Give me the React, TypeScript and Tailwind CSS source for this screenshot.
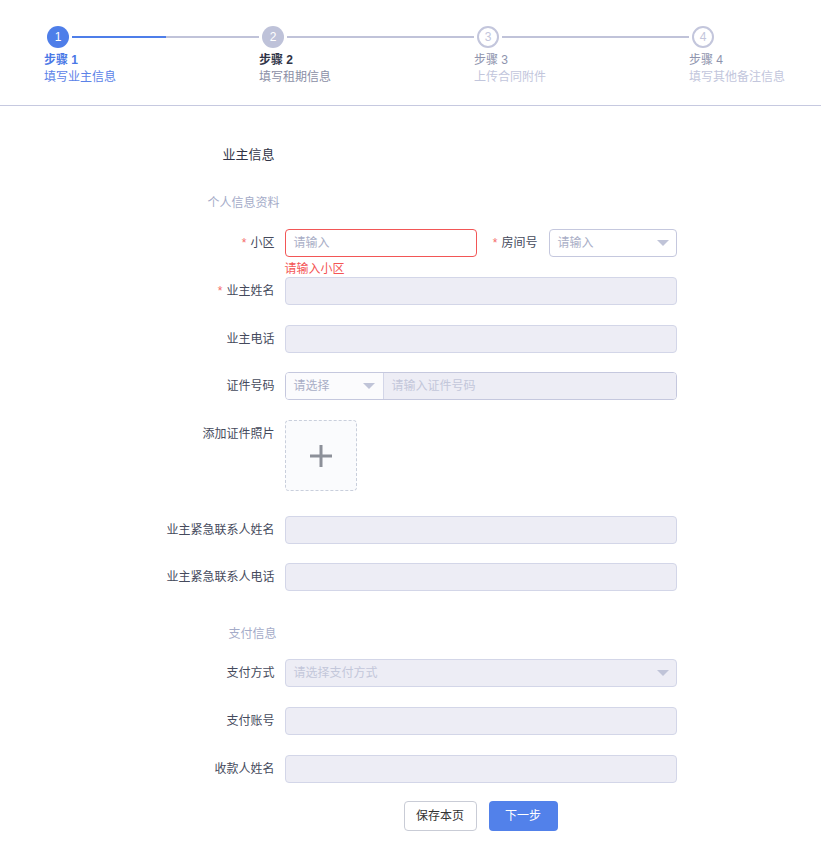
import type { ReactNode } from 'react';

const steps = [
    { no: 1, title: '步骤 1', desc: '填写业主信息', state: 'active' },
    { no: 2, title: '步骤 2', desc: '填写租期信息', state: 'current' },
    { no: 3, title: '步骤 3', desc: '上传合同附件', state: 'wait' },
    { no: 4, title: '步骤 4', desc: '填写其他备注信息', state: 'wait' },
];

function Arrow({ color = '#c0c4d8' }: { color?: string }) {
    return (
        <svg width="12" height="6" viewBox="0 0 12 6" className="shrink-0">
            <path d="M0 0h12L6 6z" fill={color} />
        </svg>
    );
}

function Row({ label, required, children, className = '' }: { label: string; required?: boolean; children: ReactNode; className?: string }) {
    return (
        <div className={`flex items-start ${className}`}>
            <label className="w-[140px] shrink-0 pr-[10px] text-right text-[12px] leading-[28px] text-[#454a5c]">
                {required && <span className="mr-[4px] text-[#f56c6c]">*</span>}
                {label}
            </label>
            <div className="min-w-0 flex-1">{children}</div>
        </div>
    );
}

function GrayInput() {
    return <div className="h-[28px] rounded-[4px] border border-[#d3d6e8] bg-[#ededf5]" />;
}

export default function App() {
    return (
        <main className="min-h-screen w-full bg-white font-['Liberation_Sans','Noto_Sans_CJK_SC',sans-serif]">
            {/* Steps */}
            <div className="flex border-b border-[#c6c9e0] px-[44px] pt-[26px] pb-[19px]">
                {steps.map((s, i) => (
                    <div key={s.no} className={i < 3 ? 'w-[215px] shrink-0' : 'flex-1 whitespace-nowrap'}>
                        <div className="flex items-center">
                            <div
                                className={
                                    s.state === 'active'
                                        ? 'ml-[3px] flex h-[22px] w-[22px] shrink-0 items-center justify-center rounded-full bg-[#4e7ee9] text-[12px] text-white'
                                        : s.state === 'current'
                                          ? 'ml-[3px] flex h-[22px] w-[22px] shrink-0 items-center justify-center rounded-full bg-[#bec2d9] text-[12px] text-white'
                                          : 'ml-[3px] flex h-[22px] w-[22px] shrink-0 items-center justify-center rounded-full border-2 border-[#c3c6dc] bg-white text-[12px] text-[#c3c6dc]'
                                }
                            >
                                {s.no}
                            </div>
                            {i < 3 && (
                                <div className="ml-[3px] flex h-[2px] flex-1">
                                    <div className={i === 0 ? 'flex-1 bg-[#4e7ee9]' : 'flex-1 bg-[#c0c3d9]'} />
                                    <div className="flex-1 bg-[#c0c3d9]" />
                                </div>
                            )}
                        </div>
                        <div
                            className={
                                s.state === 'active'
                                    ? 'mt-[4px] text-[12px] leading-[16px] font-bold text-[#4a78e6]'
                                    : s.state === 'current'
                                      ? 'mt-[4px] text-[12px] leading-[16px] font-bold text-[#303447]'
                                      : 'mt-[4px] text-[12px] leading-[16px] text-[#8e93ad]'
                            }
                        >
                            {s.title}
                        </div>
                        <div
                            className={
                                s.state === 'active'
                                    ? 'text-[12px] leading-[18px] text-[#5b82e8]'
                                    : s.state === 'current'
                                      ? 'text-[12px] leading-[18px] text-[#8b8fa6]'
                                      : 'text-[12px] leading-[18px] text-[#c2c6dc]'
                            }
                        >
                            {s.desc}
                        </div>
                    </div>
                ))}
            </div>

            {/* Form */}
            <div className="mx-auto w-[532px] pt-[39px] pb-[20px]">
                <div className="w-[140px] pr-[10px] text-right text-[13px] leading-[20px] text-[#303447]">业主信息</div>
                <div className="mt-[28px] w-[140px] pr-[5px] text-right text-[12px] leading-[20px] text-[#a4abc8]">个人信息资料</div>

                <div className="mt-[16px] flex items-start">
                    <label className="w-[140px] shrink-0 pr-[10px] text-right text-[12px] leading-[28px] text-[#454a5c]">
                        <span className="mr-[4px] text-[#f56c6c]">*</span>小区
                    </label>
                    <div className="w-[192px] shrink-0">
                        <div className="flex h-[28px] items-center rounded-[4px] border border-[#f25656] bg-white px-[8px] text-[12px] text-[#a9aec6]">
                            请输入
                        </div>
                        <div className="pt-[4px] text-[12px] leading-[16px] text-[#f45454]">请输入小区</div>
                    </div>
                    <label className="w-[72px] shrink-0 pr-[11px] text-right text-[12px] leading-[28px] text-[#454a5c]">
                        <span className="mr-[4px] text-[#f56c6c]">*</span>房间号
                    </label>
                    <div className="flex h-[28px] flex-1 items-center justify-between rounded-[4px] border border-[#c5c8de] bg-white pr-[7px] pl-[8px] text-[12px] text-[#a9aec6]">
                        请输入
                        <Arrow />
                    </div>
                </div>

                <Row label="业主姓名" required>
                    <GrayInput />
                </Row>
                <Row label="业主电话" className="mt-[20px]">
                    <GrayInput />
                </Row>
                <Row label="证件号码" className="mt-[19px]">
                    <div className="flex h-[28px] overflow-hidden rounded-[4px] border border-[#c5c8de]">
                        <div className="flex w-[98px] shrink-0 items-center justify-between border-r border-[#d3d6e8] bg-[#fbfbfd] pr-[8px] pl-[8px] text-[12px] text-[#a9aec6]">
                            请选择
                            <Arrow />
                        </div>
                        <div className="flex flex-1 items-center bg-[#ededf5] px-[8px] text-[12px] text-[#c3c7da]">请输入证件号码</div>
                    </div>
                </Row>
                <Row label="添加证件照片" className="mt-[20px]">
                    <div className="flex h-[71px] w-[72px] items-center justify-center rounded-[4px] border border-dashed border-[#c9cfdc] bg-[#fafbfd]">
                        <svg width="24" height="24" viewBox="0 0 24 24">
                            <path d="M12 1v22M1 12h22" stroke="#8c9099" strokeWidth="3" />
                        </svg>
                    </div>
                </Row>
                <Row label="业主紧急联系人姓名" className="mt-[25px]">
                    <GrayInput />
                </Row>
                <Row label="业主紧急联系人电话" className="mt-[19px]">
                    <GrayInput />
                </Row>

                <div className="mt-[33px] w-[140px] pr-[8px] text-right text-[12px] leading-[20px] text-[#a4abc8]">支付信息</div>

                <Row label="支付方式" className="mt-[15px]">
                    <div className="flex h-[28px] items-center justify-between rounded-[4px] border border-[#d3d6e8] bg-[#ededf5] pr-[7px] pl-[8px] text-[12px] text-[#c3c7da]">
                        请选择支付方式
                        <Arrow />
                    </div>
                </Row>
                <Row label="支付账号" className="mt-[20px]">
                    <GrayInput />
                </Row>
                <Row label="收款人姓名" className="mt-[20px]">
                    <GrayInput />
                </Row>

                <div className="mt-[18px] flex">
                    <div className="w-[140px] shrink-0" />
                    <div className="flex flex-1 justify-center gap-[12px]">
                        <button className="h-[30px] w-[73px] rounded-[4px] border border-[#c9ccd6] bg-white text-[12px] text-[#333]">保存本页</button>
                        <button className="h-[30px] w-[69px] rounded-[4px] bg-[#5281ea] text-[12px] text-white">下一步</button>
                    </div>
                </div>
            </div>
        </main>
    );
}
